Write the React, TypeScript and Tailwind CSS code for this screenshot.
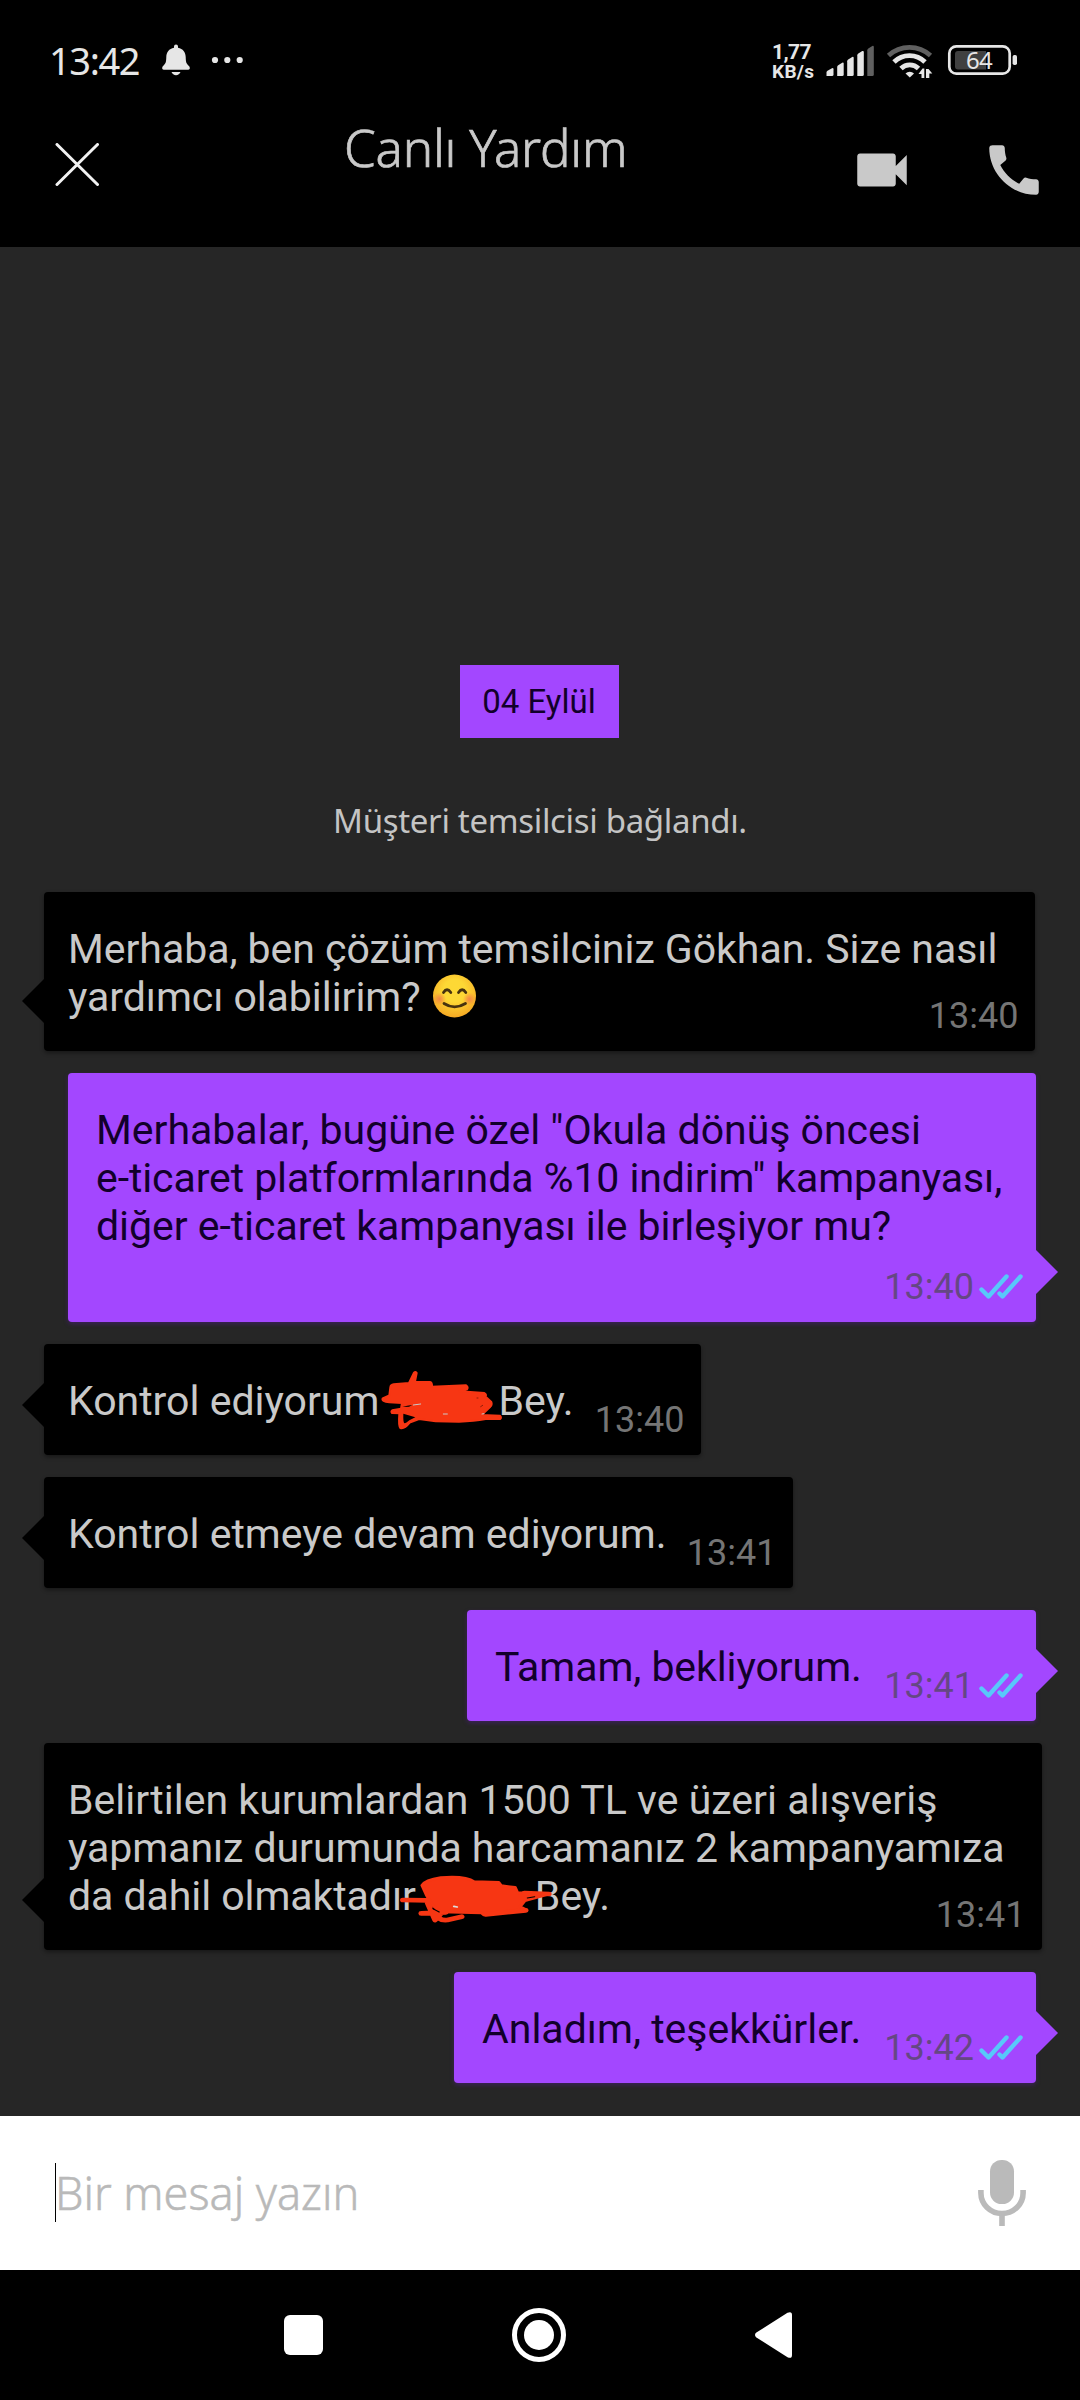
import type { ReactNode } from "react";
import { MdCall, MdVideocam } from "react-icons/md";

function StatusBar() {
  return (
    <div className="flex h-[120px] items-start pl-[49px] font-['Noto_Sans'] text-[#e6e6e6]">
      <span className="mt-[34px] w-[113px] text-[38px] leading-[52px] tracking-[-1.4px]">13:42</span>
      <svg className="mt-[44px] h-[32px] w-[28px]" viewBox="0 0 28 32" fill="currentColor">
        <path d="M12 2.5a1.8 1.8 0 0 1 4 0v1.2c5 .9 7.6 4.500 7.700 9.300.1 5.500.7 6.600 3.300 9 1.400 1.700.9 3.800-.7 3.800H1.700C.1 25.800-.4 23.700 1 22c2.600-2.400 3.200-3.500 3.300-9 .1-4.800 2.700-8.400 7.700-9.300z" />
        <path d="M9.500 28h9c-.7 2-2.500 3.200-4.500 3.200S10.200 30 9.500 28z" />
      </svg>
      <svg className="mt-[56px] ml-[21px] h-[8px] w-[34px]" viewBox="0 0 34 8" fill="currentColor">
        <circle cx="4" cy="4" r="3.100" />
        <circle cx="16.300" cy="4" r="3.100" />
        <circle cx="28.700" cy="4" r="3.100" />
      </svg>
      <div className="mt-[42px] ml-[527px] w-[54px] font-['Roboto'] font-bold">
        <div className="text-[21px] leading-[20px] tracking-[-0.6px]">1,77</div>
        <div className="text-[19px] leading-[19px] tracking-[0.3px]">KB/s</div>
      </div>
      <svg className="mt-[44px] h-[34px] w-[193px]" viewBox="826 44 193 34" fill="currentColor">
        <path d="M826.500 76v-3.500q0-1 1-1.800l4.500-2.500q1.500-.5 1.500 1V74.500q0 1.500-1.500 1.500z" />
        <path d="M837.200 76v-9q0-1 1-1.800l4-2.500q1.500-.5 1.500 1V74.500q0 1.500-1.500 1.500z" />
        <path d="M847.200 76V61.200q0-1 1-1.800l4-2.500q1.500-.5 1.500 1V74.500q0 1.500-1.500 1.500z" />
        <path d="M857.300 76V55.300q0-1 1-1.800l4-2.500q1.500-.5 1.500 1V74.500q0 1.500-1.500 1.500z" />
        <path fill="#606060" d="M867.300 76V50.200q0-1 1-1.800l4-2.500q1.500-.5 1.500 1V74.500q0 1.500-1.500 1.500z" />
        <g fill="none" stroke="currentColor" strokeWidth="4.800">
          <path stroke="#606060" d="M888.500 55.500a31 31 0 0 1 42 0" />
          <path d="M894 62a22 22 0 0 1 31 0" />
          <path d="M901 68.500a12.500 12.500 0 0 1 17.500 0" />
        </g>
        <path d="M905.500 73.500a6 6 0 0 1 8.500 0l-4.200 4z" />
        <path d="M918.500 74l4-5.500h1.800V78h-2.800v-4zM926 69h2.500l3.800 4.500h-3V78H926z" />
        <rect x="949.300" y="46.300" width="60.400" height="27.400" rx="7" fill="none" stroke="currentColor" strokeWidth="2.700" />
        <path d="M958 51h28v18.500h-28q-3 0-3-3V54q0-3 3-3z" fill="#404040" />
        <rect x="1012.600" y="55" width="4.400" height="10" rx="1.800" />
        <text x="979" y="69" textAnchor="middle" fontFamily="Noto Sans" fontSize="24" letterSpacing="-0.8">64</text>
      </svg>
    </div>
  );
}

function Header() {
  return (
    <div className="flex h-[127px] items-start pl-[55px]">
      <svg className="mt-[23px] h-[43px] w-[44px]" viewBox="0 0 44 43" fill="none" stroke="#f2f2f2" strokeWidth="3" strokeLinecap="round">
        <path d="M2 1.500l40.500 40M42.500 1.500l-40.500 40" />
      </svg>
      <h1 className="mt-[-2px] ml-[245px] w-[505px] font-['Noto_Sans'] text-[51px] leading-[58px] font-light tracking-[-0.2px] whitespace-nowrap text-[#c9c9c9] [-webkit-text-stroke:0.7px_#c9c9c9]">
        Canlı Yardım
      </h1>
      <MdVideocam className="mt-[17px] h-[66px] w-[66px] text-[#c9c9c9]" />
      <MdCall className="mt-[17px] ml-[66px] h-[66px] w-[66px] text-[#c9c9c9]" />
    </div>
  );
}

function Ticks() {
  return (
    <svg className="mb-[9px] h-[25px] w-[44px]" viewBox="0 0 44 25" fill="none" stroke="#58c8fa" strokeWidth="4.400" strokeLinecap="round" strokeLinejoin="round">
      <path d="M2.500 15.500l7 7L27.500 2.500M20.500 19.500l3 3L41.500 2.500" />
    </svg>
  );
}

type BubbleProps = { box: string; time: string; sent?: boolean; children: ReactNode };

function Bubble({ box, time, sent, children }: BubbleProps) {
  return (
    <div
      className={
        "relative grid rounded-[4px] pt-[33px] pb-[14px] whitespace-nowrap " +
        (sent
          ? "mr-[44px] self-end bg-[#a347ff] pr-[13px] pl-[28px] text-[#12002b] shadow-[0_2px_4px_rgba(80,30,140,0.5)] "
          : "ml-[44px] self-start bg-black pr-[16.5px] pl-[24px] text-[#c9c9c9] shadow-[0_2px_4px_rgba(0,0,0,0.4)] ") +
        box
      }
    >
      <p className="col-start-1 row-start-1 self-start text-[41px] leading-[48px]">{children}</p>
      <div className={"col-start-1 row-start-1 flex items-end gap-[5px] self-end justify-self-end text-[36px] leading-[42px] " + (sent ? "text-[#654784]" : "text-[#757575]")}>
        <span>{time}</span>
        {sent && <Ticks />}
      </div>
      {sent ? (
        <svg className="absolute right-[-22px] bottom-[28px] h-[44px] w-[22px]" viewBox="0 0 22 44">
          <path d="M0 0l22 22L0 44z" fill="#a347ff" />
        </svg>
      ) : (
        <svg className="absolute bottom-[28px] left-[-22px] h-[44px] w-[22px]" viewBox="0 0 22 44">
          <path d="M22 0L0 22l22 22z" fill="#000" />
        </svg>
      )}
    </div>
  );
}

function Smile() {
  return (
    <svg className="ml-[11px] inline-block h-[44px] w-[45px] align-[-7px]" viewBox="0 0 45 44">
      <defs>
        <radialGradient id="face" cx="50%" cy="38%" r="64%">
          <stop offset="0.4" stopColor="#fdd835" />
          <stop offset="1" stopColor="#f5a623" />
        </radialGradient>
        <radialGradient id="blush">
          <stop offset="0" stopColor="#f2764a" stopOpacity="0.8" />
          <stop offset="1" stopColor="#f2764a" stopOpacity="0" />
        </radialGradient>
      </defs>
      <circle cx="22.500" cy="22" r="21.500" fill="url(#face)" />
      <circle cx="7.500" cy="25" r="6.500" fill="url(#blush)" />
      <circle cx="37.500" cy="25" r="6.500" fill="url(#blush)" />
      <g fill="none" stroke="#47330f" strokeWidth="2.800" strokeLinecap="round">
        <path d="M11.500 18.500q3.500-5.500 7.300 0M26.500 18.500q3.700-5.500 7.300 0" />
        <path d="M12 29.500q10.500 6.800 21.500 0" />
      </g>
    </svg>
  );
}

/* Freehand marker strokes that hide a customer's name. */
function ScribbleOne() {
  return (
    <svg className="absolute top-[6px] left-[316px] h-[90px] w-[220px]" viewBox="0 0 660 270" fill="#f73613" stroke="#f73613" strokeLinecap="round" strokeLinejoin="round">
      <path
        strokeWidth="6"
        d="M91 112q1-8 10-9l46-4 15-31q5-5 8 1l-5 26 45 1q7 1 6 14l102-4q8 6 3 12l-22 6 74 5q7 4 4 11l17 16q3 8-3 14l-19 18-8 7 56 2q5 5 1 10l-44 0q-35 6-80 8l-70-1-50-7-28 11q-16 20-28 16-6-6-3-44l-22-1q-4-4 1-8l26-5 3-17-38-2q-24-3-20-12l20-9z"
      />
      <path d="M130 191l36 11-18 9q-10 9-14 9-5 0-4-29z" stroke="none" fill="#000" />
      <path d="M127 171q14-5 30-6l-10 5z" stroke="none" fill="#000" />
      <path d="M160 165l22-3M250 192h12M366 192l6-1" stroke="#c9c9c9" strokeWidth="3" />
      <path d="M351 144l3 0M362 170l6-4" stroke="#5a1006" strokeWidth="2" />
    </svg>
  );
}

function ScribbleTwo() {
  return (
    <svg className="absolute top-[132px] left-[354px] h-[50px] w-[155px]" viewBox="975 465 380 150" preserveAspectRatio="none" fill="#f73613" stroke="#f73613" strokeLinecap="round" strokeLinejoin="round">
      <path strokeWidth="8" d="M1034 496q8-16 46-23 60-6 82 12l60 2 6 10 34 5 6 16 78 4-60 20-12 18 16 10-104 15-6-6-100-3-20-20-14-28z" />
      <g fill="none" strokeWidth="14">
        <path d="M987 540l60 1M1032 580l60-3M1048 550l18 50 16-22M1066 575q6 28 30 25l35-10M1190 583l98-12M1285 519l60 3" />
      </g>
      <path d="M1292 534l18-4M1060 566l16 10" stroke="#000" strokeWidth="3" />
      <path d="M1112 559l8 2" stroke="#dddddd" strokeWidth="5" />
    </svg>
  );
}

export default function App() {
  return (
    <div className="flex h-[2400px] w-[1080px] flex-col overflow-hidden bg-black font-['Roboto',sans-serif]">
      <StatusBar />
      <Header />

      <main className="flex h-[1869px] flex-col bg-[#262626] pt-[418px]">
        <div className="mr-[2px] flex h-[73px] w-[159px] items-center justify-center self-center bg-[#a347ff] text-[33px] text-[#12002b]">
          04 Eylül
        </div>
        <p className="mt-[58px] h-[74px] self-center font-['Noto_Sans'] text-[33px] leading-[50px] tracking-[-0.33px] whitespace-nowrap text-[#c4c4c4]">
          Müşteri temsilcisi bağlandı.
        </p>

        <div className="mt-[22px] flex flex-col gap-[22px]">
          <Bubble box="h-[159px] w-[991px]" time="13:40">
            <span className="tracking-[-0.03px]">Merhaba, ben çözüm temsilciniz Gökhan. Size nasıl</span>
            <br />
            <span className="tracking-[-0.06px]">yardımcı olabilirim?</span>
            <Smile />
          </Bubble>
          <Bubble box="h-[249px] w-[968px]" time="13:40" sent>
            Merhabalar, bugüne özel "Okula dönüş öncesi
            <br />
            <span className="tracking-[-0.09px]">e-ticaret platformlarında %10 indirim" kampanyası,</span>
            <br />
            <span className="tracking-[-0.04px]">diğer e-ticaret kampanyası ile birleşiyor mu?</span>
          </Bubble>
          <Bubble box="h-[111px] w-[657px]" time="13:40">
            Kontrol ediyorum
            <span className="inline-block w-[119px]" />
            Bey.
            <ScribbleOne />
          </Bubble>
          <Bubble box="h-[111px] w-[749px]" time="13:41">
            Kontrol etmeye devam ediyorum.
          </Bubble>
          <Bubble box="h-[111px] w-[569px]" time="13:41" sent>
            <span className="tracking-[-0.08px]">Tamam, bekliyorum.</span>
          </Bubble>
          <Bubble box="h-[207px] w-[998px]" time="13:41">
            <span className="tracking-[0.03px]">Belirtilen kurumlardan 1500 TL ve üzeri alışveriş</span>
            <br />
            <span className="tracking-[-0.06px]">yapmanız durumunda harcamanız 2 kampanyamıza</span>
            <br />
            <span className="tracking-[-0.06px]">da dahil olmaktadır</span>
            <span className="inline-block w-[119px]" />
            Bey.
            <ScribbleTwo />
          </Bubble>
          <Bubble box="h-[111px] w-[582px]" time="13:42" sent>
            Anladım, teşekkürler.
          </Bubble>
        </div>
      </main>

      <div className="flex h-[154px] items-start justify-between bg-white pr-[53px] pl-[55px]">
        <div className="mt-[47px] flex h-[59px] items-center border-l border-black font-['Noto_Sans'] text-[45px] leading-[59px] font-light tracking-[0px] whitespace-nowrap text-[#b9b9b9] [-webkit-text-stroke:0.5px_#b9b9b9]">
          <span className="ml-[-1px]">Bir mesaj yazın</span>
        </div>
        <svg className="mt-[44px] h-[66px] w-[50px]" viewBox="0 0 50 66" fill="#bababa">
          <rect x="13" y="0" width="24" height="44" rx="11.500" />
          <path d="M3.900 30v3a21.100 20.500 0 0 0 42.200 0v-3M25 54v12" fill="none" stroke="#bababa" strokeWidth="5.600" />
        </svg>
      </div>

      <nav className="flex h-[130px] items-center justify-center gap-[189px] pr-[4px]">
        <span className="h-[40px] w-[39px] rounded-[6px] bg-white" />
        <span className="flex h-[54px] w-[54px] items-center justify-center rounded-full border-[5px] border-white">
          <span className="h-[30px] w-[30px] rounded-full bg-white" />
        </span>
        <svg className="h-[46px] w-[37px]" viewBox="0 0 37 46" fill="#fff">
          <path d="M1 20.800 L32.500.8Q37-1.200 37 3V43q0 4.200-4.500 2.200L1 25.200q-2-2.200 0-4.400z" />
        </svg>
      </nav>
    </div>
  );
}
